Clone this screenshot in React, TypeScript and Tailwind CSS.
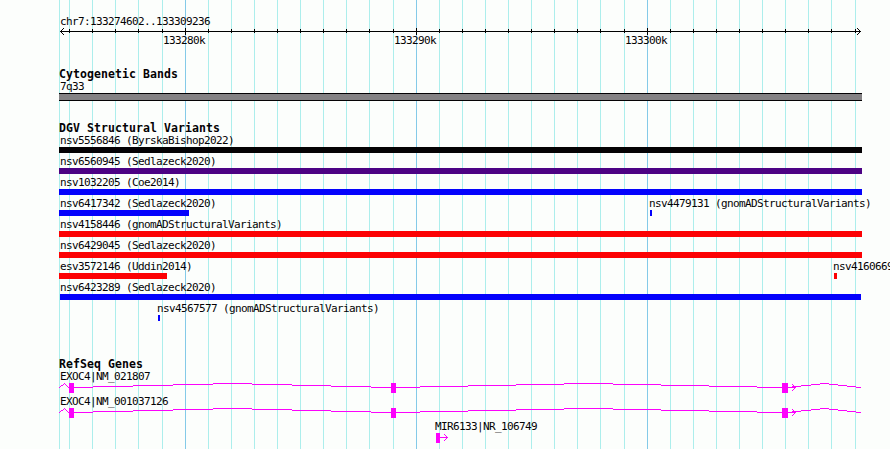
interface Feature {
  name: string;
  start: number;
  end: number;
  color: string;
  labelX: number;
}

const minorLines = [
  59, 69, 92, 115, 138, 162, 208, 231, 254, 277, 300, 323, 346, 369, 393, 439,
  462, 485, 508, 531, 554, 577, 600, 624, 670, 693, 716, 739, 762, 785, 808,
  831, 855,
];
const majorLines = [185, 416, 647];

const tickLabels = [
  { x: 163, text: "133280k" },
  { x: 394, text: "133290k" },
  { x: 625, text: "133300k" },
];

// one entry per row, a row can hold several features
const variantRows: Feature[][] = [
  [{ name: "nsv5556846 (ByrskaBishop2022)", start: 59, end: 862, color: "bg-[#040204]", labelX: 60 }],
  [{ name: "nsv6560945 (Sedlazeck2020)", start: 59, end: 862, color: "bg-[#4c0284]", labelX: 60 }],
  [{ name: "nsv1032205 (Coe2014)", start: 59, end: 862, color: "bg-[#0402fc]", labelX: 60 }],
  [
    { name: "nsv6417342 (Sedlazeck2020)", start: 59, end: 189, color: "bg-[#0402fc]", labelX: 60 },
    { name: "nsv4479131 (gnomADStructuralVariants)", start: 650, end: 652, color: "bg-[#0402fc]", labelX: 649 },
  ],
  [{ name: "nsv4158446 (gnomADStructuralVariants)", start: 59, end: 862, color: "bg-[#fc0204]", labelX: 60 }],
  [{ name: "nsv6429045 (Sedlazeck2020)", start: 59, end: 862, color: "bg-[#fc0204]", labelX: 60 }],
  [
    { name: "esv3572146 (Uddin2014)", start: 59, end: 167, color: "bg-[#fc0204]", labelX: 60 },
    { name: "nsv4160669", start: 834, end: 837, color: "bg-[#fc0204]", labelX: 833 },
  ],
  [{ name: "nsv6423289 (Sedlazeck2020)", start: 60, end: 861, color: "bg-[#0402fc]", labelX: 60 }],
  [{ name: "nsv4567577 (gnomADStructuralVariants)", start: 158, end: 160, color: "bg-[#0402fc]", labelX: 157 }],
];

// [x from, x to, y] steps of the intron line
const introns = [
  [59, 60, 5], [60, 61, 4], [61, 63, 3], [63, 64, 2], [64, 65, 1], [65, 66, 2], [66, 67, 3], [67, 68, 4], [68, 69, 5],
  [74, 93, 5], [93, 133, 4], [133, 173, 3], [173, 213, 2], [213, 252, 1],
  [252, 292, 2], [292, 331, 3], [331, 371, 4], [371, 391, 5],
  [396, 420, 5], [420, 468, 4], [468, 516, 3], [516, 564, 2], [564, 613, 1],
  [613, 661, 2], [661, 709, 3], [709, 757, 4], [757, 782, 5],
  [788, 796, 5], [792, 801, 4], [801, 811, 3], [811, 820, 2], [820, 829, 1],
  [829, 838, 2], [838, 847, 3], [847, 856, 4], [856, 861, 5],
];

function Gridlines() {
  return (
    <svg className="absolute inset-0" width="890" height="449" shapeRendering="crispEdges">
      {minorLines.map((x) => (
        <rect key={x} x={x} y="0" width="1" height="449" fill="#aceeec" />
      ))}
      {majorLines.map((x) => (
        <rect key={x} x={x} y="0" width="1" height="449" fill="#84cae8" />
      ))}
    </svg>
  );
}

function Label({ x, text }: { x: number; text: string }) {
  return (
    <div
      className="h-3 text-[11px] leading-[14px] tracking-[-0.622px] whitespace-pre"
      style={{ marginLeft: x }}
    >
      {text}
    </div>
  );
}

function Title({ text }: { text: string }) {
  return (
    <h2 className="ml-[59px] h-3 text-[11.5px] leading-3 font-bold tracking-[0.077px]">
      {text}
    </h2>
  );
}

function Ruler() {
  return (
    <svg className="block" width="890" height="8" shapeRendering="crispEdges">
      <rect x="60" y="4" width="801" height="1" />
      {minorLines.slice(1).map((x) => (
        <rect key={x} x={x} y="2" width="1" height="4" />
      ))}
      {majorLines.map((x) => (
        <rect key={x} x={x} y="1" width="1" height="7" />
      ))}
      {[1, 2, 3].map((i) => (
        <g key={i}>
          <rect x={60 + i} y={4 - i} width="1" height="1" />
          <rect x={60 + i} y={4 + i} width="1" height="1" />
          <rect x={860 - i} y={4 - i} width="1" height="1" />
          <rect x={860 - i} y={4 + i} width="1" height="1" />
        </g>
      ))}
    </svg>
  );
}

function ArrowHead({ x }: { x: number }) {
  return (
    <g>
      {[1, 2, 3].map((i) => (
        <g key={i}>
          <rect x={x - i} y={5 - i} width="1" height="1" />
          <rect x={x - i} y={5 + i} width="1" height="1" />
        </g>
      ))}
    </g>
  );
}

function ExocGene({ name }: { name: string }) {
  return (
    <div>
      <Label x={60} text={name} />
      <svg className="block" width="890" height="13" fill="#fc02fc" shapeRendering="crispEdges">
        {introns.map(([from, to, y]) => (
          <rect key={from} x={from} y={y} width={to - from} height="1" />
        ))}
        <rect x="69" y="1" width="5" height="10" />
        <rect x="391" y="1" width="5" height="10" />
        <rect x="782" y="1" width="6" height="10" />
        <ArrowHead x={795} />
      </svg>
    </div>
  );
}

export default function App() {
  return (
    <div className="relative h-[449px] w-[890px] overflow-hidden bg-[#fcfefc] font-['DejaVu_Sans_Mono',monospace] text-[#040204]">
      <Gridlines />
      <main className="relative flex flex-col pt-[15px]">
        <section>
          <Label x={60} text="chr7:133274602..133309236" />
          <Ruler />
          <div className="-mt-px grid">
            {tickLabels.map((t) => (
              <div key={t.x} className="[grid-area:1/1]">
                <Label x={t.x} text={t.text} />
              </div>
            ))}
          </div>
        </section>

        <section className="mt-[22px]">
          <Title text="Cytogenetic Bands" />
          <Label x={60} text="7q33" />
          <div className="mt-px ml-[59px] h-2 w-[803px] border-y border-[#040204] bg-[#848284]" />
        </section>

        <section className="mt-[21px]">
          <Title text="DGV Structural Variants" />
          {variantRows.map((row, i) => (
            <div key={i} className="grid h-[21px] w-[890px] grid-cols-[890px]">
              {row.map((f) => (
                <div key={f.name} className="[grid-area:1/1]">
                  <Label x={f.labelX} text={f.name} />
                  <div
                    className={`mt-px h-1.5 ${f.color}`}
                    style={{ marginLeft: f.start, width: f.end - f.start }}
                  />
                </div>
              ))}
            </div>
          ))}
        </section>

        <section className="mt-[35px]">
          <Title text="RefSeq Genes" />
          <ExocGene name="EXOC4|NM_021807" />
          <ExocGene name="EXOC4|NM_001037126" />
          <Label x={435} text="MIR6133|NR_106749" />
          <svg className="block" width="890" height="13" fill="#fc02fc" shapeRendering="crispEdges">
            <rect x="436" y="1" width="4" height="10" />
            <rect x="440" y="5" width="8" height="1" />
            <ArrowHead x={447} />
          </svg>
        </section>
      </main>
    </div>
  );
}
